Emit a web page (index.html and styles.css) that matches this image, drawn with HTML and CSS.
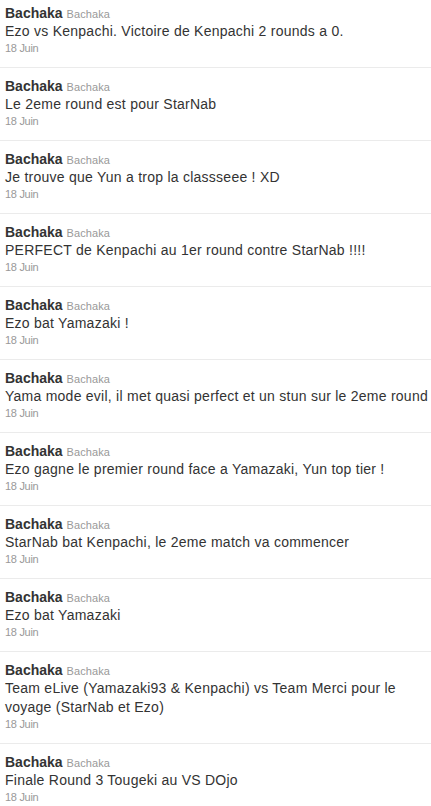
FILE: index.html
```html
<!DOCTYPE html>
<html lang="fr">
<head>
<meta charset="utf-8">
<title>Bachaka</title>
<link rel="stylesheet" href="styles.css">
</head>
<body>
<ul class="timeline">
  <li class="tweet"><div class="meta"><span class="name">Bachaka</span> <span class="screen">Bachaka</span></div><p class="text">Ezo vs Kenpachi. Victoire de Kenpachi 2 rounds a 0.</p><div class="date">18 Juin</div></li>
  <li class="tweet"><div class="meta"><span class="name">Bachaka</span> <span class="screen">Bachaka</span></div><p class="text">Le 2eme round est pour StarNab</p><div class="date">18 Juin</div></li>
  <li class="tweet"><div class="meta"><span class="name">Bachaka</span> <span class="screen">Bachaka</span></div><p class="text">Je trouve que Yun a trop la classseee ! XD</p><div class="date">18 Juin</div></li>
  <li class="tweet"><div class="meta"><span class="name">Bachaka</span> <span class="screen">Bachaka</span></div><p class="text">PERFECT de Kenpachi au 1er round contre StarNab !!!!</p><div class="date">18 Juin</div></li>
  <li class="tweet"><div class="meta"><span class="name">Bachaka</span> <span class="screen">Bachaka</span></div><p class="text">Ezo bat Yamazaki !</p><div class="date">18 Juin</div></li>
  <li class="tweet"><div class="meta"><span class="name">Bachaka</span> <span class="screen">Bachaka</span></div><p class="text">Yama mode evil, il met quasi perfect et un stun sur le 2eme round</p><div class="date">18 Juin</div></li>
  <li class="tweet"><div class="meta"><span class="name">Bachaka</span> <span class="screen">Bachaka</span></div><p class="text">Ezo gagne le premier round face a Yamazaki, Yun top tier !</p><div class="date">18 Juin</div></li>
  <li class="tweet"><div class="meta"><span class="name">Bachaka</span> <span class="screen">Bachaka</span></div><p class="text">StarNab bat Kenpachi, le 2eme match va commencer</p><div class="date">18 Juin</div></li>
  <li class="tweet"><div class="meta"><span class="name">Bachaka</span> <span class="screen">Bachaka</span></div><p class="text">Ezo bat Yamazaki</p><div class="date">18 Juin</div></li>
  <li class="tweet"><div class="meta"><span class="name">Bachaka</span> <span class="screen">Bachaka</span></div><p class="text">Team eLive (Yamazaki93 &amp; Kenpachi) vs Team Merci pour le voyage (StarNab et Ezo)</p><div class="date">18 Juin</div></li>
  <li class="tweet"><div class="meta"><span class="name">Bachaka</span> <span class="screen">Bachaka</span></div><p class="text">Finale Round 3 Tougeki au VS DOjo</p><div class="date">18 Juin</div></li>
</ul>
</body>
</html>
```
FILE: styles.css
```css
html, body {
  margin: 0;
  padding: 0;
  background: #fff;
}
body {
  font-family: "Liberation Sans", Arial, sans-serif;
  color: #333;
  overflow: hidden;
}
.timeline {
  list-style: none;
  margin: 0;
  padding: 0;
}
.tweet {
  padding: 9px 0 11px 5px;
  border-bottom: 1px solid #ebebeb;
}
.tweet:first-child {
  padding-top: 4px;
}
.meta {
  font-size: 14px;
  line-height: 18px;
  height: 18px;
}
.name {
  font-weight: bold;
  color: #333;
}
.screen {
  font-size: 11px;
  line-height: 11px;
  letter-spacing: 0.1px;
  color: #999;
}
.text {
  margin: 0;
  font-size: 14px;
  line-height: 19px;
  letter-spacing: 0.25px;
  color: #333;
}
.date {
  font-size: 11px;
  line-height: 15px;
  letter-spacing: -0.3px;
  color: #999;
}
```
